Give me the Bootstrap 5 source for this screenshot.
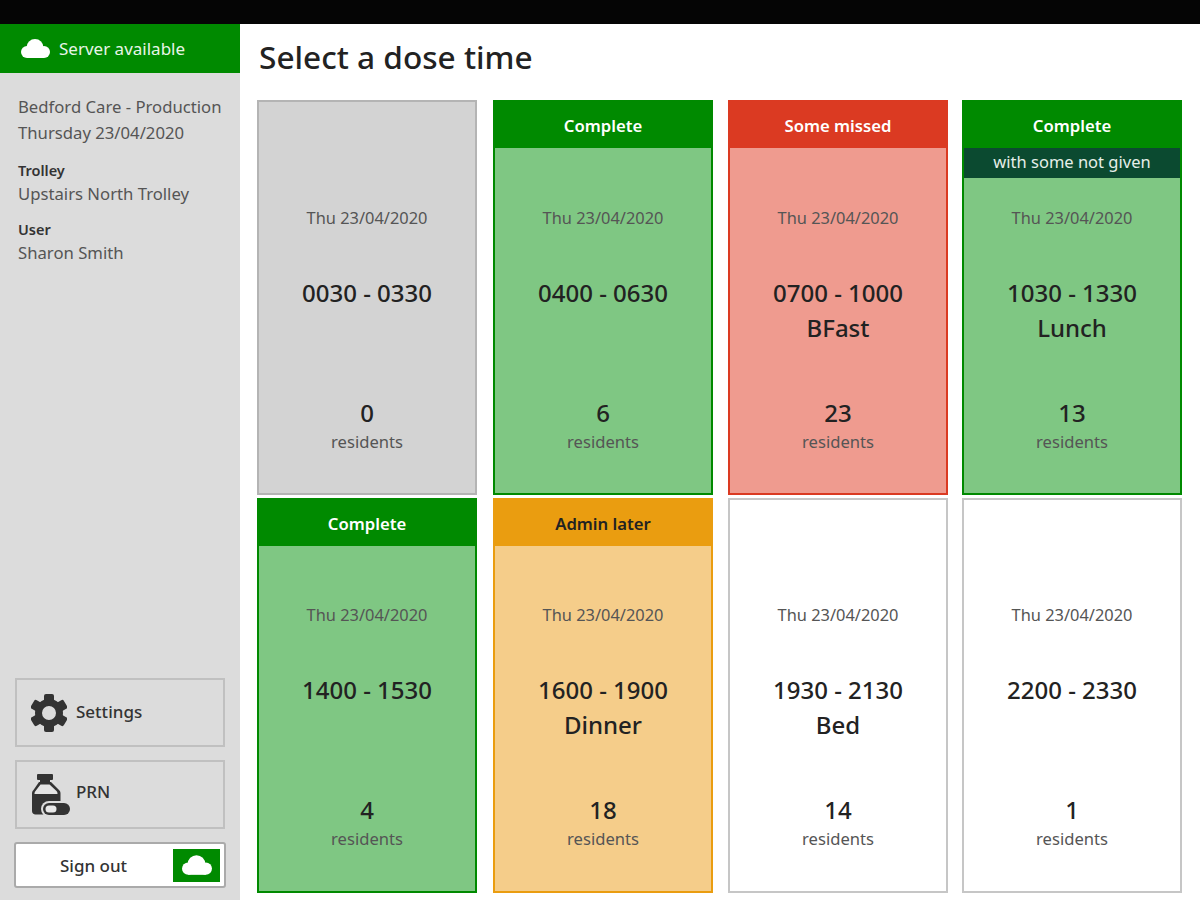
<!DOCTYPE html>
<html lang="en">
<head>
<meta charset="utf-8">
<title>Select a dose time</title>
<link href="https://cdn.jsdelivr.net/npm/bootstrap@5.3.0/dist/css/bootstrap.min.css" rel="stylesheet">
<style>
html,body{height:900px;overflow:hidden}
body{font-family:"Noto Sans","Liberation Sans",sans-serif;color:#222;background:#fff}
.topstrip{height:24px;background:#050505}
.shell{height:876px}
.side{width:240px;background:#dcdcdc;flex:none}
.server{height:49px;background:#008a00;color:#e8f5e8;font-size:17px;padding-left:21px;gap:9px}
.info{padding:21px 18px 0;color:#555;font-size:16.7px;line-height:26px}
.info-label{font-size:14.5px;font-weight:600;color:#333;line-height:22px;margin-top:13px}
.info-label.tight{margin-top:11px}
.side-btn{height:69px;margin:0 15px 13px;border:2px solid #c0c0c0;padding-left:14px;gap:9px;font-size:17px;font-weight:500;color:#333}
.side-btn span{margin-top:-2px}
.side-btn.prn span{margin-top:-6px}
.signout{height:46px;margin:0 14px 12px;border:2px solid #aaa;border-radius:3px;background:#fff;font-size:17px;font-weight:500;color:#333;padding:4px 4px 4px 0}
.signout span{flex:1;text-align:center;margin-top:2px;padding-left:2px;padding-right:4px}
.signout i{width:47px;height:33px;background:#008a00;display:flex;align-items:center;justify-content:center}
.main-pane{padding-left:17px}
.page-title{font-size:31.6px;font-weight:500;line-height:40px;margin:13px 0 23px 2px;color:#222}
.dose-grid{display:grid;grid-template-columns:236px 235px 234px 220px;grid-auto-rows:395px;row-gap:3px}
.dose{width:220px;border:2px solid #c6c6c6;background:#fff;display:flex;flex-direction:column;text-align:center}
.dose-slot{height:76px;flex:none}
.dose:nth-child(n+5) .dose-slot{height:75px}
.dose-head{height:46px;line-height:47px;font-size:16.7px;font-weight:600;color:#fff}
.dose-sub{height:30px;line-height:28px;font-size:16.5px;color:#e6efe9;background:#0b4a30}
.dose-date{margin-top:29px;line-height:22px;font-size:16.4px;color:#555}
.dose-time{margin-top:46px;font-size:24px;line-height:35px;font-weight:500;color:#222;height:70px}
.dose-count{margin-top:53px;font-size:24px;line-height:30px;font-weight:500;color:#222}
.dose-unit{font-size:16.6px;line-height:26px;margin-top:1px;color:#555}
.st-idle{background:#d3d3d3;border-color:#b4b4b4}
.st-ok{background:#7fc783;border-color:#008a00}
.st-ok .dose-head{background:#008a00}
.st-miss{background:#ef9b8f;border-color:#db3a22}
.st-miss .dose-head{background:#db3a22}
.st-later{background:#f5cd8a;border-color:#ea9d10}
.st-later .dose-head{background:#ea9d10;color:#222}
</style>
</head>
<body>
<svg width="0" height="0" class="d-block" aria-hidden="true"><defs>
  <g id="cloud" fill="#fff"><circle cx="6" cy="13" r="6"/><circle cx="14" cy="8.500" r="8.500"/><circle cx="23" cy="13" r="6"/><rect x="6" y="10" width="17" height="9"/></g>
</defs></svg>
<div class="topstrip"></div>
<div class="shell d-flex">
  <aside class="side d-flex flex-column">
    <div class="server d-flex align-items-center">
      <svg width="29" height="19" viewBox="0 0 29 19"><use href="#cloud"/></svg>
      <span>Server available</span>
    </div>
    <div class="info">
      <div>Bedford Care - Production</div>
      <div>Thursday 23/04/2020</div>
      <div class="info-label">Trolley</div>
      <div>Upstairs North Trolley</div>
      <div class="info-label tight">User</div>
      <div>Sharon Smith</div>
    </div>
    <div class="mt-auto">
      <div class="side-btn d-flex align-items-center">
        <svg width="36" height="38" viewBox="-18 -19 36 38"><g fill="#333"><rect x="-5" y="-19" width="10" height="10" rx="2"/><rect x="-5" y="-19" width="10" height="10" rx="2" transform="rotate(60)"/><rect x="-5" y="-19" width="10" height="10" rx="2" transform="rotate(120)"/><rect x="-5" y="-19" width="10" height="10" rx="2" transform="rotate(180)"/><rect x="-5" y="-19" width="10" height="10" rx="2" transform="rotate(240)"/><rect x="-5" y="-19" width="10" height="10" rx="2" transform="rotate(300)"/></g><circle r="10.500" fill="none" stroke="#333" stroke-width="7"/></svg>
        <span>Settings</span>
      </div>
      <div class="side-btn prn d-flex align-items-center">
        <svg width="36" height="42" viewBox="0 0 36 42" overflow="visible"><rect x="6" y="0" width="16" height="6" rx="1" fill="#333"/><rect x="9" y="6" width="10" height="4" fill="#333"/><path fill="#333" d="M8 8h12l8 8c1 1 1.500 2 1.500 3.500V37c0 2-1.500 3.500-3.500 3.500H4.500C2.500 40.500 1 39 1 37V19.500C1 18 1.500 17 2.500 16Z"/><path fill="#e4e4e4" d="M9.500 10.500h9l7 6.500c.6.600 1 1.500 1 2.500V20H3.500v-.5c0-1 .4-1.900 1-2.500Z"/><rect x="10" y="27" width="30" height="16" rx="8" fill="#dcdcdc"/><rect x="12" y="29" width="27" height="12" rx="6" fill="#333"/><rect x="14.500" y="31.500" width="11" height="7" rx="3.500" fill="#e8e8e8"/></svg>
        <span>PRN</span>
      </div>
      <div class="signout d-flex align-items-center">
        <span>Sign out</span>
        <i><svg width="30" height="20" viewBox="0 0 29 19"><use href="#cloud"/></svg></i>
      </div>
    </div>
  </aside>
  <main class="main-pane flex-grow-1">
    <h1 class="page-title">Select a dose time</h1>
    <div class="dose-grid">
      <div class="dose st-idle"><div class="dose-slot"></div><div class="dose-date">Thu 23/04/2020</div><div class="dose-time">0030 - 0330</div><div class="dose-count">0</div><div class="dose-unit">residents</div></div>
      <div class="dose st-ok"><div class="dose-slot"><div class="dose-head">Complete</div></div><div class="dose-date">Thu 23/04/2020</div><div class="dose-time">0400 - 0630</div><div class="dose-count">6</div><div class="dose-unit">residents</div></div>
      <div class="dose st-miss"><div class="dose-slot"><div class="dose-head">Some missed</div></div><div class="dose-date">Thu 23/04/2020</div><div class="dose-time">0700 - 1000<br>BFast</div><div class="dose-count">23</div><div class="dose-unit">residents</div></div>
      <div class="dose st-ok"><div class="dose-slot"><div class="dose-head">Complete</div><div class="dose-sub">with some not given</div></div><div class="dose-date">Thu 23/04/2020</div><div class="dose-time">1030 - 1330<br>Lunch</div><div class="dose-count">13</div><div class="dose-unit">residents</div></div>
      <div class="dose st-ok"><div class="dose-slot"><div class="dose-head">Complete</div></div><div class="dose-date">Thu 23/04/2020</div><div class="dose-time">1400 - 1530</div><div class="dose-count">4</div><div class="dose-unit">residents</div></div>
      <div class="dose st-later"><div class="dose-slot"><div class="dose-head">Admin later</div></div><div class="dose-date">Thu 23/04/2020</div><div class="dose-time">1600 - 1900<br>Dinner</div><div class="dose-count">18</div><div class="dose-unit">residents</div></div>
      <div class="dose"><div class="dose-slot"></div><div class="dose-date">Thu 23/04/2020</div><div class="dose-time">1930 - 2130<br>Bed</div><div class="dose-count">14</div><div class="dose-unit">residents</div></div>
      <div class="dose"><div class="dose-slot"></div><div class="dose-date">Thu 23/04/2020</div><div class="dose-time">2200 - 2330</div><div class="dose-count">1</div><div class="dose-unit">residents</div></div>
    </div>
  </main>
</div>
<script src="https://cdn.jsdelivr.net/npm/bootstrap@5.3.0/dist/js/bootstrap.bundle.min.js"></script>
</body>
</html>
